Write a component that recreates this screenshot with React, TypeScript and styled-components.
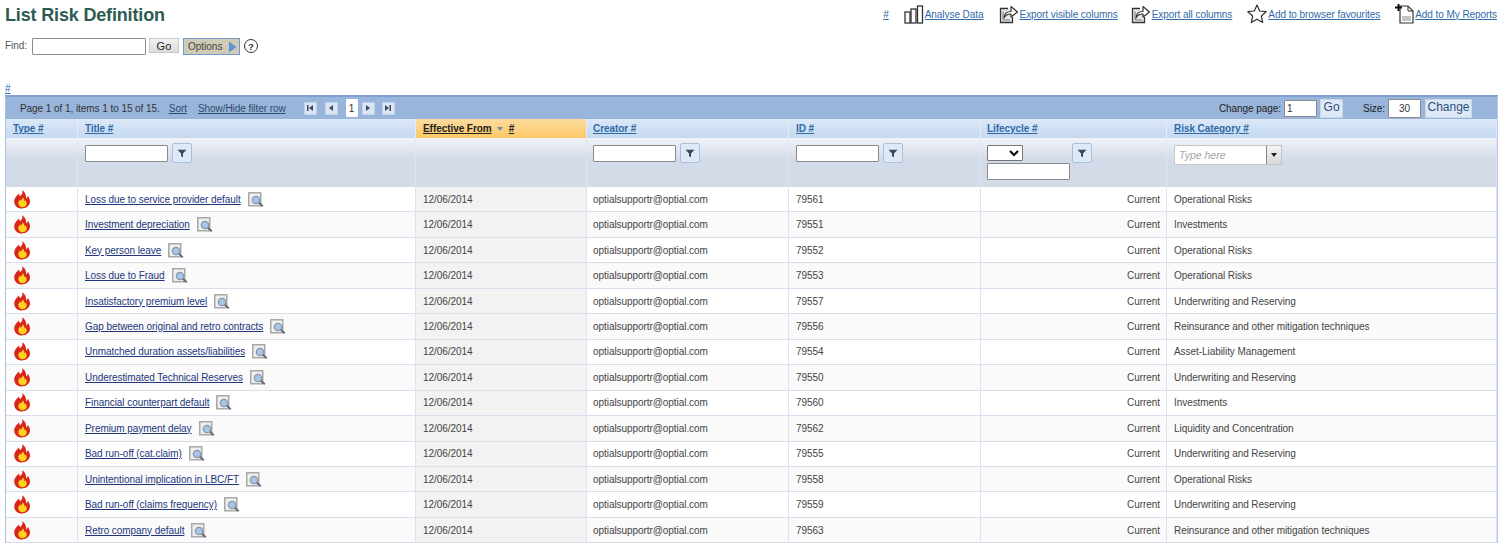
import React from "react";
import styled, { createGlobalStyle } from "styled-components";

const Global = createGlobalStyle`
  html, body { margin: 0; padding: 0; background: #fff; overflow: hidden; height: 543px; }
  body { font-family: "Liberation Sans", Arial, sans-serif; font-size: 10px; letter-spacing: -0.06px; color: #444; }
`;
const COLS = "72px 338px 171px 202px 192px 186px 1fr";

const Page = styled.div`padding: 0 2px 0 5px; width: 1500px; box-sizing: border-box; overflow: hidden; height: 543px;`;
const TopBar = styled.div`display: flex; justify-content: space-between; align-items: flex-start; height: 38px;`;
const Title = styled.h1`margin: 5px 0 0; font-size: 18px; letter-spacing: -0.16px; line-height: 21px; font-weight: bold; color: #2d5b52;`;
const Actions = styled.div`display: flex; align-items: center; padding: 3px 1px 0 0;`;
const ActionLink = styled.a<{ $gap: number }>`
  display: flex; align-items: center; margin-left: ${(p) => p.$gap}px; color: #2f6aa8; text-decoration: underline; font-size: 10px; height: 22px;
  svg { flex: none; margin-right: 1px; }
`;
const FindRow = styled.div`display: flex; align-items: flex-start; height: 45px;`;
const FindLabel = styled.span`margin: 2px 5px 0 0; font-size: 10px; color: #555; line-height: 11px;`;
const TextBox = styled.input<{ $w: number; $h?: number; $gap?: number; $center?: boolean }>`
  box-sizing: border-box; width: ${(p) => p.$w}px; height: ${(p) => p.$h ?? 17}px; margin-left: ${(p) => p.$gap ?? 0}px; border: 1px solid #8b8b8b; border-radius: 1px; background: #fff; padding: 0 2px;
  font: 10px "Liberation Sans", sans-serif; color: #333; outline: none; display: block; text-align: ${(p) => (p.$center ? "center" : "left")};
`;
const GreyButton = styled.button`
  box-sizing: border-box; width: 30px; height: 15px; margin-left: 3px; padding: 0; border: 1px solid #c8c8c8; background: linear-gradient(#f2f2f2, #dcdcdc);
  font: 11px "Liberation Sans", sans-serif; color: #222;
`;
const OptionsButton = styled.button`
  box-sizing: border-box; display: flex; align-items: center; justify-content: space-between; width: 57px; height: 17px; margin-left: 4px; padding: 0 2px 0 4px;
  border: 1px solid #6f9bd0; background: #cfcbb6; font: 10px "Liberation Sans", sans-serif; color: #444;
`;
const Help = styled.span`
  box-sizing: border-box; width: 14px; height: 14px; margin: 1px 0 0 4px; border: 1.5px solid #333; border-radius: 50%;
  display: flex; align-items: center; justify-content: center; font-size: 9.5px; font-weight: bold; color: #333;
`;
const HashLine = styled.a`display: block; height: 12px; line-height: 11px; font-size: 10px; color: #2f6aa8; text-decoration: underline;`;
const Grid = styled.div`border-top: 2px solid #7f9fcf; border-left: 1px solid #a9c0de; border-right: 1px solid #b8cbe6;`;
const Toolbar = styled.div`display: flex; align-items: center; justify-content: space-between; height: 22px; background: #9ab5db; padding: 0 25px 0 14px; color: #333;`;
const ToolLeft = styled.div`display: flex; align-items: center;`;
const ToolLink = styled.a<{ $gap: number }>`margin-left: ${(p) => p.$gap}px; color: #2e4a6b; text-decoration: underline;`;
const Pager = styled.div`display: flex; align-items: center; margin-left: 18px;`;
const PageBtn = styled.span<{ $gap: number }>`
  box-sizing: border-box; width: 13px; height: 13px; margin-left: ${(p) => p.$gap}px; background: #dbe6f5; border: 1px solid #c3d3ea; border-radius: 1px;
  display: flex; align-items: center; justify-content: center;
`;
const PageCurrent = styled.span`
  width: 12px; height: 18px; margin-left: 8px; background: #fff; border-radius: 1px; display: flex; align-items: center; justify-content: center; color: #333;
`;
const ToolRight = styled.div`display: flex; align-items: center; color: #222;`;
const SmallBtn = styled.button<{ $w: number; $gap: number }>`
  box-sizing: border-box; width: ${(p) => p.$w}px; height: 19px; margin-left: ${(p) => p.$gap}px; padding: 0 0 3px; border: 1px solid #c8d6ea; background: #dfe9f6; font: 12px "Liberation Sans", sans-serif; color: #2d4f80;
`;
const SizeLabel = styled.span`margin: 0 3px 0 20px;`;
const Row = styled.div`display: grid; grid-template-columns: ${COLS};`;
const HeadCell = styled.div<{ $sorted?: boolean; $pad?: number }>`
  box-sizing: border-box; height: 19px; padding: 3px 0 0 ${(p) => p.$pad ?? 7}px; border-right: 1px solid #e4ecf7; font-weight: bold; font-size: 10px; line-height: 13px;
  background: ${(p) => (p.$sorted ? "linear-gradient(#fddc9f, #fcc866)" : "linear-gradient(#dce8f7, #c5d9f1)")};
  a { color: ${(p) => (p.$sorted ? "#222" : "#2f6aa8")}; text-decoration: underline; }
`;
const SortMark = styled.span`
  display: inline-block; margin: 0 6px 0 5px; width: 0; height: 0; border: 3.5px solid transparent; border-top: 4px solid #7a8aa8; border-bottom: 0; vertical-align: middle;
`;
const FilterCell = styled.div<{ $pad?: number }>`
  box-sizing: border-box; height: 49px; padding: 7px 0 0 ${(p) => p.$pad ?? 7}px; border-right: 1px solid #dfe5ef; background: linear-gradient(#f0f3f8 0, #d3dbe8 22px, #d3dbe8 100%);
`;
const FilterLine = styled.div`display: flex; align-items: flex-start; gap: 4px;`;
const FilterBtn = styled.span<{ $gap?: number }>`
  box-sizing: border-box; width: 20px; height: 20px; margin-top: -2px; margin-left: ${(p) => p.$gap ?? 0}px; background: #dfe8f5; border: 1px solid #a9c0de; border-radius: 2px;
  display: flex; align-items: center; justify-content: center;
`;
const LifeSelect = styled.select`
  box-sizing: border-box; width: 36px; height: 16px; background: #fff; border: 1px solid #777; border-radius: 1px; display: block; font-size: 10px; padding: 0;
`;
const Combo = styled.div`box-sizing: border-box; display: flex; width: 108px; height: 20px;`;
const ComboInput = styled.input`
  box-sizing: border-box; width: 93px; height: 20px; border: 1px solid #c8c8c8; border-right: 1px solid #888; background: #fff; padding: 0 4px; font: italic 10.5px "Liberation Sans", sans-serif;
  &::placeholder { color: #a5a5a5; opacity: 1; }
`;
const ComboArrow = styled.span`
  box-sizing: border-box; width: 15px; height: 20px; background: linear-gradient(#f4f4f4, #d8d8d8); border: 1px solid #c4c4c4; border-left: 0; display: flex; align-items: center; justify-content: center;
  &::after { content: ""; border: 3px solid transparent; border-top: 4px solid #222; border-bottom: 0; }
`;
const Body = styled.div`display: flex; flex-direction: column;`;
const DataRow = styled(Row)<{ $alt: boolean }>`height: 25.46px; background: ${(p) => (p.$alt ? "#fafafa" : "#fff")};`;
const Cell = styled.div<{ $right?: boolean; $sorted?: boolean; $pad?: number }>`
  box-sizing: border-box; display: flex; align-items: center; padding: 0 6px 0 ${(p) => p.$pad ?? 7}px; border-right: 1px solid #dde3ef; border-bottom: 1px solid #d8dfec; font-size: 10px; color: #444; white-space: nowrap;
  justify-content: ${(p) => (p.$right ? "flex-end" : "flex-start")};
  background: ${(p) => (p.$sorted ? "#f2f2f2" : "transparent")};
`;
const TypeCell = styled(Cell)`padding: 0 0 0 7px; overflow: hidden;`;
const TitleLink = styled.a`color: #23367a; text-decoration: underline; margin-right: 7px;`;

const Flame = () => (
  <svg width="19" height="19" viewBox="0 0 19 19">
    <path d="M9 0.500c1.200 2.600-.4 4.200-1.900 5.800C6.500 5.400 6.200 4.600 6.100 3.600 3.200 6.200.6 9 1.400 13c.7 3.300 3.600 5.500 7.200 5.500 4.300 0 8.400-2.800 8.400-7 0-2.600-1.200-4-2.100-5.800-.2 1.200-.7 2.200-1.700 2.800.1-3.400-1-6.300-3.700-8z" fill="#d8261c" />
    <path d="M9.500 7.200c.3 1.800-1 2.400-1.600 3.500-.2-.5-.4-.9-.5-1.400-1.300 1.300-2.500 2.800-2 4.800.4 1.900 2 3.200 3.900 3.200 2.500 0 4.400-1.600 4.400-3.800 0-1.400-.7-2.300-1.100-3.300-.3.6-.6 1-1 1.300 0-1.800-.8-3.400-2.100-4.300z" fill="#ffd21f" />
  </svg>
);
const Lens = () => (
  <svg width="16" height="15" viewBox="0 0 16 15">
    <rect x="0.750" y="0.750" width="12" height="13" fill="#eeeeee" stroke="#a8a8a8" strokeWidth="1.500" />
    <circle cx="8" cy="8" r="3.700" fill="#a5c6ea" stroke="#8a96a4" strokeWidth="1.200" />
    <path d="M10.800 10.800l4 3.500" stroke="#667" strokeWidth="1.800" />
  </svg>
);
const Funnel = () => (
  <svg width="10" height="9" viewBox="0 0 10 9"><path d="M.5.800h9L6 4.500V8.500L4 7V4.500z" fill="#3d4a5c" /></svg>
);
const Chart = () => (
  <svg width="20" height="19" viewBox="0 0 20 19" fill="#fff" stroke="#333" strokeWidth="1.300">
    <rect x="1" y="7" width="5" height="11" /><rect x="7" y="4" width="5" height="14" /><rect x="13.500" y="1" width="5" height="17" />
  </svg>
);
const Export = () => (
  <svg width="20" height="19" viewBox="0 0 20 19">
    <path d="M9 3.500H1.500v14h12V12" fill="#e8e8e8" stroke="#333" strokeWidth="1.300" />
    <path d="M4 6.500v8.500h7" fill="none" stroke="#777" strokeWidth="1" />
    <path d="M5 13c.3-4 3-6.500 7-6.500V1.500L18.500 7l-6.500 5v-3c-3 0-5.500 1-7 4z" fill="#fff" stroke="#333" strokeWidth="1.200" strokeLinejoin="round" />
  </svg>
);
const Star = () => (
  <svg width="20" height="20" viewBox="0 0 20 20">
    <path d="M10 1l2.700 6 6.500.7-4.900 4.300 1.400 6.500L10 15.200 4.300 18.500 5.700 12 .8 7.700 7.300 7z" fill="#fff" stroke="#333" strokeWidth="1.200" strokeLinejoin="round" />
  </svg>
);
const Doc = () => (
  <svg width="19" height="20" viewBox="0 0 19 20">
    <path d="M5 2h8l5 5v12H5z" fill="#fff" stroke="#333" strokeWidth="1.200" />
    <path d="M13 2v5h5" fill="none" stroke="#333" strokeWidth="1" />
    <rect x="7" y="12" width="9" height="5" fill="#c4c4c4" />
    <path d="M3.500 0v7M0 3.500h7" stroke="#111" strokeWidth="2" />
  </svg>
);
const Arrow = () => (
  <svg width="9" height="12" viewBox="0 0 9 12"><path d="M1 0.500L8.500 6 1 11.500z" fill="#5b93d6" /></svg>
);
const NavIcon = ({ d }: { d: string }) => (
  <svg width="8" height="8" viewBox="0 0 8 8"><path d={d} fill="#3b4a60" /></svg>
);

const rows: [string, string, string][] = [
  ["Loss due to service provider default", "79561", "Operational Risks"],
  ["Investment depreciation", "79551", "Investments"],
  ["Key person leave", "79552", "Operational Risks"],
  ["Loss due to Fraud", "79553", "Operational Risks"],
  ["Insatisfactory premium level", "79557", "Underwriting and Reserving"],
  ["Gap between original and retro contracts", "79556", "Reinsurance and other mitigation techniques"],
  ["Unmatched duration assets/liabilities", "79554", "Asset-Liability Management"],
  ["Underestimated Technical Reserves", "79550", "Underwriting and Reserving"],
  ["Financial counterpart default", "79560", "Investments"],
  ["Premium payment delay", "79562", "Liquidity and Concentration"],
  ["Bad run-off (cat.claim)", "79555", "Underwriting and Reserving"],
  ["Unintentional implication in LBC/FT", "79558", "Operational Risks"],
  ["Bad run-off (claims frequency)", "79559", "Underwriting and Reserving"],
  ["Retro company default", "79563", "Reinsurance and other mitigation techniques"],
];

export default function App() {
  return (
    <Page>
      <Global />
      <TopBar>
        <Title>List Risk Definition</Title>
        <Actions>
          <ActionLink $gap={0}>#</ActionLink>
          <ActionLink $gap={15}><Chart />Analyse Data</ActionLink>
          <ActionLink $gap={15}><Export />Export visible columns</ActionLink>
          <ActionLink $gap={13}><Export />Export all columns</ActionLink>
          <ActionLink $gap={15}><Star />Add to browser favourites</ActionLink>
          <ActionLink $gap={15}><Doc />Add to My Reports</ActionLink>
        </Actions>
      </TopBar>
      <FindRow>
        <FindLabel>Find:</FindLabel>
        <TextBox $w={114} />
        <GreyButton>Go</GreyButton>
        <OptionsButton>Options <Arrow /></OptionsButton>
        <Help>?</Help>
      </FindRow>
      <HashLine>#</HashLine>
      <Grid>
        <Toolbar>
          <ToolLeft>
            <span>Page 1 of 1, items 1 to 15 of 15.</span>
            <ToolLink $gap={9}>Sort</ToolLink>
            <ToolLink $gap={11}>Show/Hide filter row</ToolLink>
            <Pager>
              <PageBtn $gap={0}><NavIcon d="M1 1h1.500v6H1zM7 1v6L3 4z" /></PageBtn>
              <PageBtn $gap={8}><NavIcon d="M6 1v6L2 4z" /></PageBtn>
              <PageCurrent>1</PageCurrent>
              <PageBtn $gap={4}><NavIcon d="M2 1v6l4-3z" /></PageBtn>
              <PageBtn $gap={7}><NavIcon d="M1 1v6l4-3zM5.500 1H7v6H5.500z" /></PageBtn>
            </Pager>
          </ToolLeft>
          <ToolRight>
            <span>Change page:</span>
            <TextBox $w={33} $gap={3} defaultValue="1" />
            <SmallBtn $w={23} $gap={3}>Go</SmallBtn>
            <SizeLabel>Size:</SizeLabel>
            <TextBox $w={33} $h={19} $center defaultValue="30" />
            <SmallBtn $w={47} $gap={4}>Change</SmallBtn>
          </ToolRight>
        </Toolbar>
        <Row>
          <HeadCell><a>Type #</a></HeadCell>
          <HeadCell><a>Title #</a></HeadCell>
          <HeadCell $sorted><a>Effective From</a><SortMark /><a>#</a></HeadCell>
          <HeadCell $pad={6}><a>Creator #</a></HeadCell>
          <HeadCell><a>ID #</a></HeadCell>
          <HeadCell $pad={6}><a>Lifecycle #</a></HeadCell>
          <HeadCell><a>Risk Category #</a></HeadCell>
        </Row>
        <Row>
          <FilterCell />
          <FilterCell><FilterLine><TextBox $w={83} /><FilterBtn><Funnel /></FilterBtn></FilterLine></FilterCell>
          <FilterCell />
          <FilterCell $pad={6}><FilterLine><TextBox $w={83} /><FilterBtn><Funnel /></FilterBtn></FilterLine></FilterCell>
          <FilterCell><FilterLine><TextBox $w={83} /><FilterBtn><Funnel /></FilterBtn></FilterLine></FilterCell>
          <FilterCell $pad={6}>
            <FilterLine>
              <LifeSelect />
              <FilterBtn $gap={45}><Funnel /></FilterBtn>
            </FilterLine>
            <TextBox $w={83} />
          </FilterCell>
          <FilterCell><Combo><ComboInput placeholder="Type here" /><ComboArrow /></Combo></FilterCell>
        </Row>
        <Body>
          {rows.map(([title, id, cat], i) => (
            <DataRow key={id} $alt={i % 2 === 1}>
              <TypeCell><Flame /></TypeCell>
              <Cell><TitleLink>{title}</TitleLink><Lens /></Cell>
              <Cell $sorted>12/06/2014</Cell>
              <Cell $pad={6}>optialsupportr@optial.com</Cell>
              <Cell>{id}</Cell>
              <Cell $right>Current</Cell>
              <Cell>{cat}</Cell>
            </DataRow>
          ))}
        </Body>
      </Grid>
    </Page>
  );
}
